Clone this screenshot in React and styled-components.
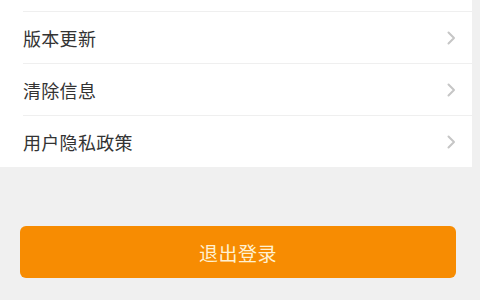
import styled, { createGlobalStyle } from "styled-components";

const GlobalStyle = createGlobalStyle`
    html, body {
        margin: 0;
        padding: 0;
        background: #f0f0f0;
        font-family: "Noto Sans CJK SC", "Noto Sans", sans-serif;
    }
`;

const items = ["版本更新", "清除信息", "用户隐私政策"];

const Chevron = () => (
    <svg width="9" height="14" viewBox="0 0 9 14">
        <path d="M1.5 1.5 L7 7 L1.5 12.5" fill="none" stroke="#c6c6c6" strokeWidth="2" strokeLinecap="round" strokeLinejoin="round" />
    </svg>
);

const App = () => (
    <>
        <GlobalStyle />
        <Page>
            <List>
                {items.map((label) => (
                    <Row key={label}>
                        <Label>{label}</Label>
                        <Chevron />
                    </Row>
                ))}
            </List>
            <LogoutButton>退出登录</LogoutButton>
        </Page>
    </>
);

const Page = styled.div`
    width: 480px;
    height: 300px;
    overflow: hidden;
    background: #f0f0f0;
`;

const List = styled.div`
    width: 472px;
    background: #ffffff;
    padding-top: 11px;
`;

const Row = styled.div`
    display: flex;
    align-items: center;
    justify-content: space-between;
    height: 51px;
    margin-left: 23px;
    padding-right: 16px;
    border-top: 1px solid #efefef;
`;

const Label = styled.span`
    font-size: 18px;
    color: #333333;
    letter-spacing: 0.3px;
`;

const LogoutButton = styled.button`
    display: block;
    width: 436px;
    height: 52px;
    margin: 59px 0 0 20px;
    border: none;
    border-radius: 6px;
    background: #f78c02;
    color: #fff1d2;
    font-family: inherit;
    font-size: 19px;
    letter-spacing: 0.5px;
`;

export default App;
